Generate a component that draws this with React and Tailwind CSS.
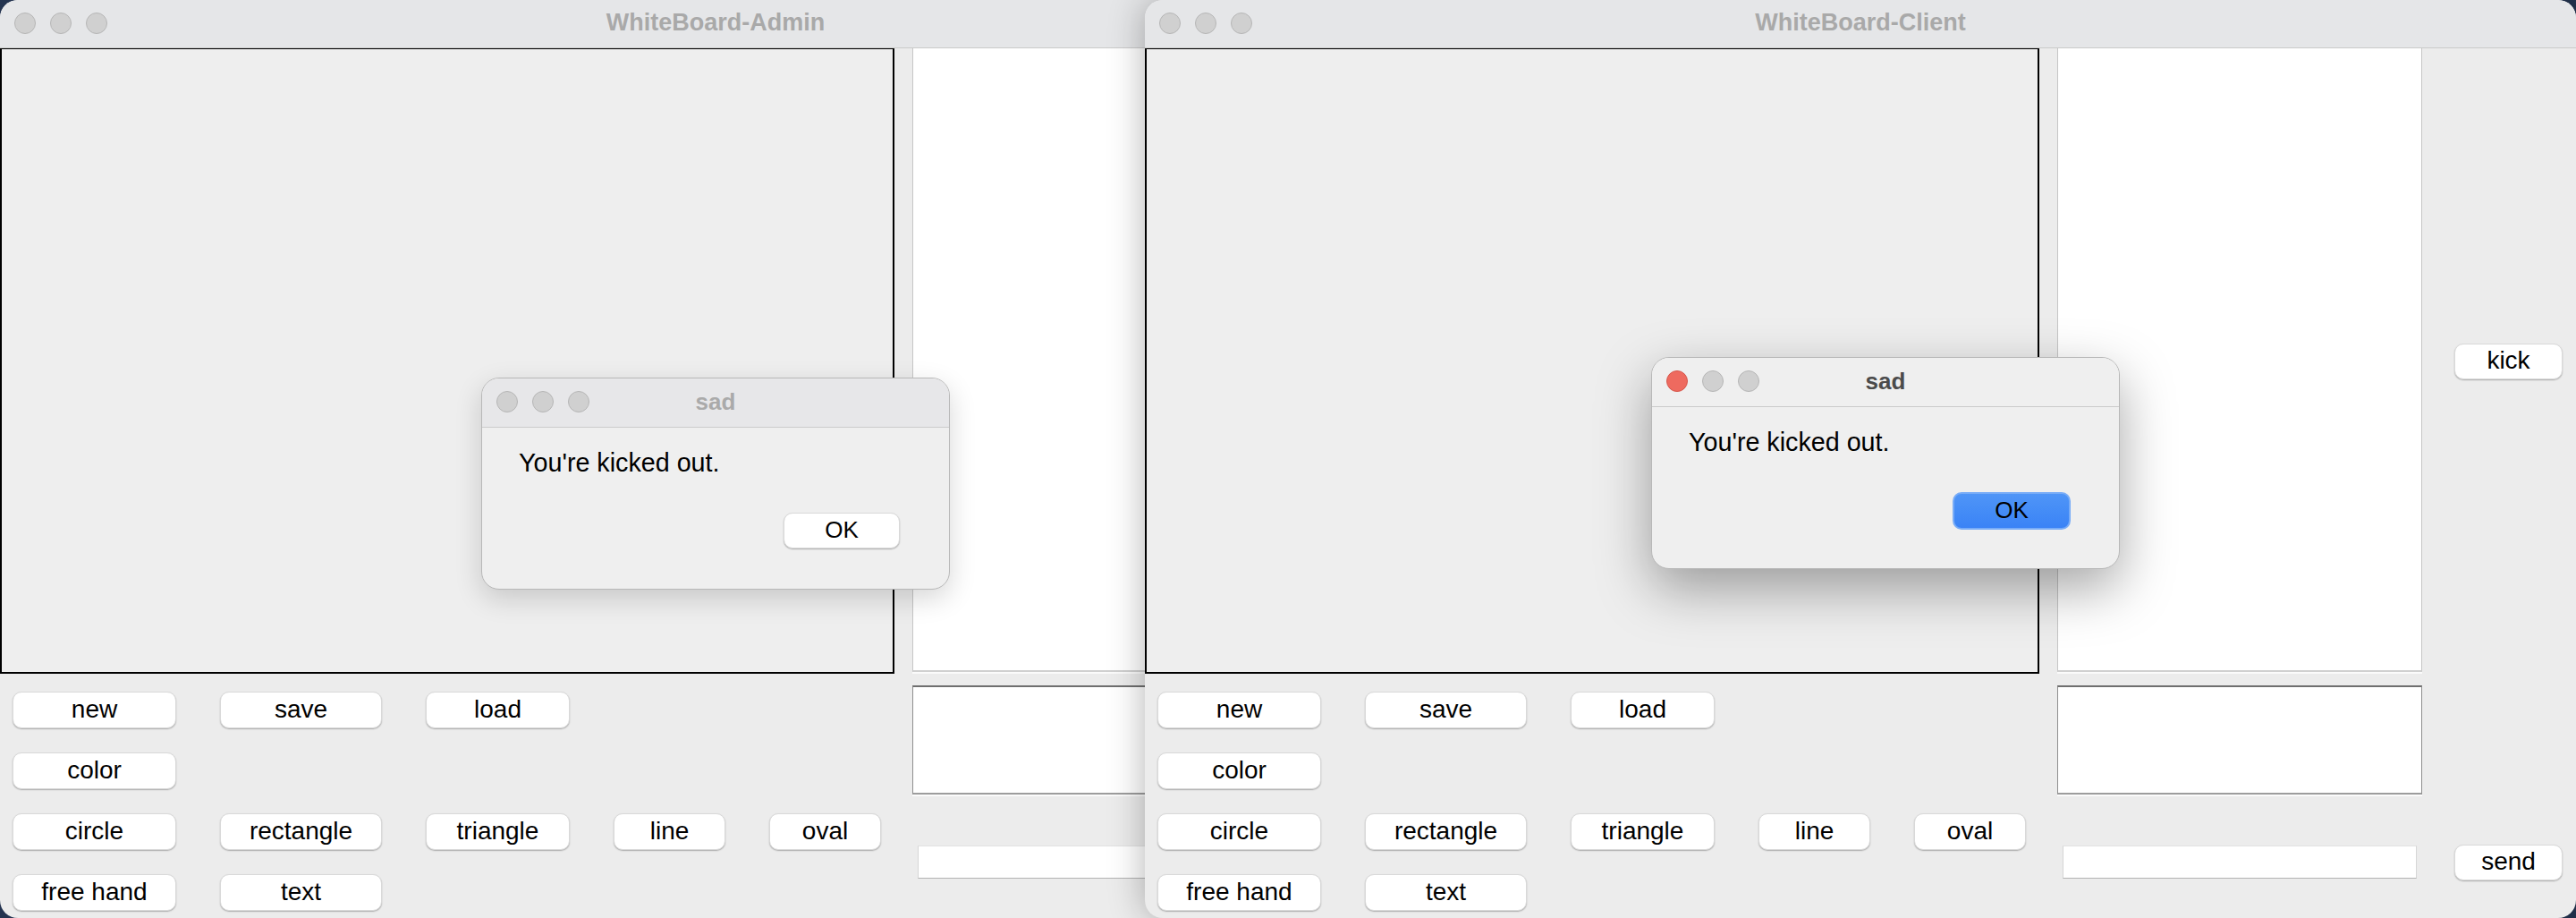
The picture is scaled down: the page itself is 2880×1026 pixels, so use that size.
import React from "react";

function Lights({ active }) {
  return (
    <div className="absolute left-[16px] top-[14px] flex gap-[16px]">
      <div className={`w-[24px] h-[24px] rounded-full border ${active ? "bg-[#ee6a5f] border-[#d5574c]" : "bg-[#d0d0d0] border-[#b6b6b6]"}`} />
      <div className="w-[24px] h-[24px] rounded-full border bg-[#d0d0d0] border-[#b6b6b6]" />
      <div className="w-[24px] h-[24px] rounded-full border bg-[#d0d0d0] border-[#b6b6b6]" />
    </div>
  );
}

function Btn({ children, className = "" }) {
  return (
    <div
      className={`flex items-center justify-center bg-white rounded-[10px] border border-[#d9d9d9] shadow-[0_1px_1.5px_rgba(0,0,0,0.28)] text-[28px] leading-none text-black pb-[2px] ${className}`}
    >
      {children}
    </div>
  );
}

function AppWindow({ title, className = "" }) {
  return (
    <div
      className={`absolute top-0 w-[1600px] h-[1026px] rounded-[20px] overflow-hidden bg-[#ececec] flex flex-col ${className}`}
    >
      <div className="relative h-[54px] shrink-0 bg-[#e5e6e8] border-b border-[#cacaca] flex items-center justify-center">
        <Lights active={false} />
        <span className="font-bold text-[27px] leading-none text-[#a9a9a9] pb-[2px]">{title}</span>
      </div>
      <div className="flex">
        <div className="w-[1000px] flex flex-col">
          <div className="h-[700px] -mt-[1px] border-2 border-black bg-[#eeeeee]" />
          <div className="grid grid-cols-[183px_181px_161px_125px_125px] auto-rows-[41px] gap-x-[49px] gap-y-[27px] pl-[14px] mt-[20px]">
            <Btn>new</Btn>
            <Btn>save</Btn>
            <Btn>load</Btn>
            <div />
            <div />
            <Btn>color</Btn>
            <div />
            <div />
            <div />
            <div />
            <Btn>circle</Btn>
            <Btn>rectangle</Btn>
            <Btn>triangle</Btn>
            <Btn>line</Btn>
            <Btn>oval</Btn>
            <Btn>free hand</Btn>
            <Btn>text</Btn>
          </div>
        </div>
        <div className="ml-[20px] w-[408px] flex flex-col">
          <div className="h-[698px] -mt-[1px] bg-white border-t border-t-[#9c9c9c] border-x border-x-[#c6c6c6] border-b-2 border-b-[#d0d0d0] shadow-[0_2px_0_#fbfbfb]" />
          <div className="h-[122px] mt-[15px] bg-white border-t-2 border-t-[#6f6f6f] border-x border-x-[#8f8f8f] border-b-2 border-b-[#9d9d9d] shadow-[0_2px_0_#fbfbfb]" />
          <div className="h-[37px] mt-[57px] mx-[6px] bg-white border-t border-t-[#e2e2e2] border-x border-x-[#d6d6d6] border-b border-b-[#b3b3b3]" />
        </div>
        <div className="ml-[36px] w-[121px] flex flex-col pt-[330px]">
          <Btn className="h-[40px]">kick</Btn>
          <Btn className="h-[40px] mt-[520px]">send</Btn>
        </div>
      </div>
    </div>
  );
}

function Dialog({ active, className = "" }) {
  return (
    <div
      className={`absolute w-[524px] h-[237px] rounded-[20px] bg-[#efefef] border border-[#b8b8b8] overflow-hidden flex flex-col ${className}`}
    >
      <div
        className={`relative h-[55px] shrink-0 border-b border-[#cbcbcb] flex items-center justify-center ${active ? "bg-[#efefef]" : "bg-[#e7e7e9]"}`}
      >
        <Lights active={active} />
        <span className={`font-bold text-[26px] leading-none pb-[2px] ${active ? "text-[#4b4b4b]" : "text-[#aaaaaa]"}`}>sad</span>
      </div>
      <div className="pl-[41px] pt-[23px] text-[28.7px] leading-[32px] text-black">You're kicked out.</div>
      <div className="flex justify-end pr-[55px] mt-[40px]">
        {active ? (
          <div className="w-[132px] h-[42px] -mr-[1px] flex items-center justify-center rounded-[10px] border-2 border-[#78acf7] bg-[linear-gradient(#4f95f7,#3a83f6)] text-[26px] leading-none text-black pb-[2px]">
            OK
          </div>
        ) : (
          <div className="w-[130px] h-[40px] flex items-center justify-center rounded-[10px] bg-white border border-[#d9d9d9] shadow-[0_1px_1.5px_rgba(0,0,0,0.28)] text-[26px] leading-none text-black pb-[2px]">
            OK
          </div>
        )}
      </div>
    </div>
  );
}

export default function App() {
  return (
    <div className="relative w-[2880px] h-[1026px] overflow-hidden bg-[#243450] font-['Liberation_Sans',Arial,sans-serif]">
      <AppWindow title="WhiteBoard-Admin" className="left-0" />
      <Dialog active={false} className="left-[538px] top-[422px] shadow-[0_10px_30px_rgba(0,0,0,0.16)]" />
      <AppWindow title="WhiteBoard-Client" className="left-[1280px] shadow-[0_0_40px_rgba(0,0,0,0.3)]" />
      <Dialog active={true} className="left-[1846px] top-[399px] shadow-[0_22px_60px_rgba(0,0,0,0.35)]" />
    </div>
  );
}
